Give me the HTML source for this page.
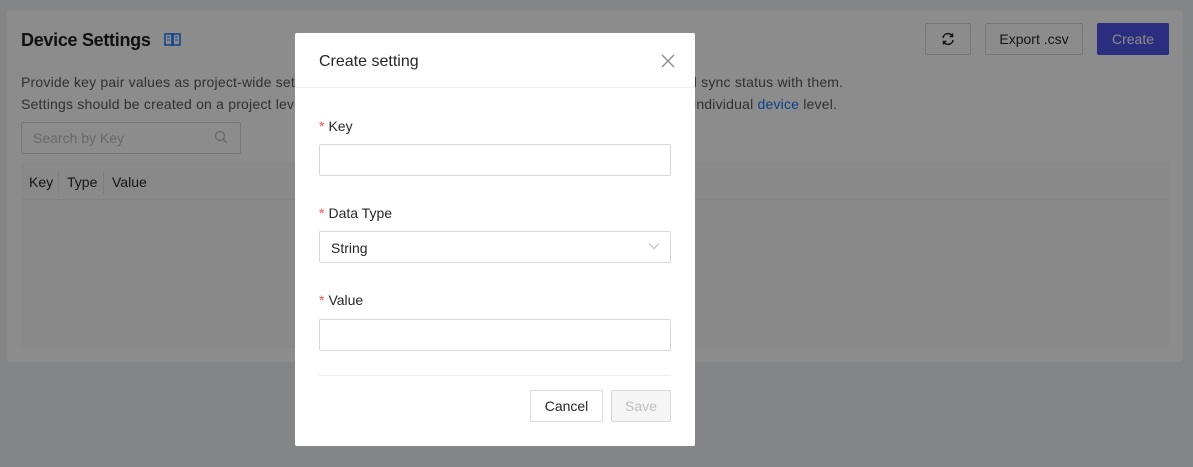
<!DOCTYPE html>
<html><head><style>
*{box-sizing:border-box;margin:0;padding:0}
body{width:1193px;height:467px;position:relative;overflow:hidden;background:#f0f2f5;font-family:"Liberation Sans",sans-serif;font-size:14px;color:#262626}
.a{position:absolute}
.card{left:7px;top:10px;width:1176px;height:352px;background:#fff;border-radius:4px}
.ov{left:0;top:0;width:1193px;height:467px;background:rgba(0,0,0,0.45)}
.btn{border:1px solid #d9d9d9;border-radius:2px;background:#fff;display:flex;align-items:center;justify-content:center;font-size:14px}
.inp{border:1px solid #d9d9d9;border-radius:2px;background:#fff;left:24px;width:352px;height:32px}
.lbl{left:24px;font-size:14px}
.lbl b{color:#ff4d4f;font-weight:normal;margin-right:4px}
</style></head><body>
<div class="a card"></div>
<div class="a" style="left:21px;top:30px;font-size:18px;font-weight:bold;color:#1f1f1f;letter-spacing:-0.3px">Device Settings</div>
<svg class="a" style="left:164px;top:33px" width="17" height="13" viewBox="0 0 17 13"><rect x="1" y="1" width="7" height="11" fill="none" stroke="#1677ff" stroke-width="1.5"/><rect x="9" y="1" width="7" height="11" fill="none" stroke="#1677ff" stroke-width="1.5"/><path d="M3 4h3M3 7h3M11 4h3M11 7h3" stroke="#1677ff"/></svg>
<div class="a btn" style="left:925px;top:23px;width:46px;height:32px"><svg width="16" height="16" viewBox="0 0 16 16" fill="none" stroke="#262626" stroke-width="1.5"><path d="M3 7A5 5 0 0 1 12.5 5.5M13 9A5 5 0 0 1 3.5 10.5"/><path d="M12.5 2.5v3h-3M3.5 13.5v-3h3"/></svg></div>
<div class="a btn" style="left:985px;top:23px;width:98px;height:32px">Export .csv</div>
<div class="a btn" style="left:1097px;top:23px;width:72px;height:32px;background:#4f52e8;border-color:#4f52e8;color:#fff">Create</div>
<div class="a" style="left:21px;top:71px;color:#595959;line-height:22px;letter-spacing:0.2px;white-space:nowrap">Provide key pair values as project-wide settings that devices can use and the devices will report individual sync status with them.<br>Settings should be created on a project level and you can override the settings for specific devices on an individual <span style="color:#1677ff">device</span> level.</div>
<div class="a" style="left:21px;top:122px;width:220px;height:32px;border:1px solid #d9d9d9;border-radius:2px;padding:7px 11px;color:#bfbfbf">Search by Key</div>
<svg class="a" style="left:214px;top:130px" width="14" height="14" viewBox="0 0 14 14" fill="none" stroke="#bfbfbf" stroke-width="1.3"><circle cx="6" cy="6" r="4.5"/><path d="M9.5 9.5L13 13"/></svg>
<div class="a" style="left:21px;top:162px;width:1148px;height:38px;background:#fafafa;border-bottom:1px solid #f0f0f0"></div>
<div class="a" style="left:29px;top:174px">Key</div>
<div class="a" style="left:58px;top:172px;width:1px;height:22px;background:#e8e8e8"></div>
<div class="a" style="left:67px;top:174px">Type</div>
<div class="a" style="left:103px;top:172px;width:1px;height:22px;background:#e8e8e8"></div>
<div class="a" style="left:112px;top:174px">Value</div>
<div class="a" style="left:21px;top:200px;width:1148px;height:148px;background:#fafafa"></div>
<div class="a ov"></div>
<div class="a" style="left:295px;top:33px;width:400px;height:413px;background:#fff;border-radius:2px">
 <div class="a" style="left:24px;top:20px;font-size:16px">Create setting</div>
 <svg class="a" style="left:366px;top:21px" width="14" height="14" viewBox="0 0 14 14" stroke="#8c8c8c" stroke-width="1.4"><path d="M1 1L13 13M13 1L1 13"/></svg>
 <div class="a" style="left:0;top:54px;width:400px;height:1px;background:#f0f0f0"></div>
 <div class="a lbl" style="top:85px"><b>*</b>Key</div>
 <div class="a inp" style="top:111px"></div>
 <div class="a lbl" style="top:172px"><b>*</b>Data Type</div>
 <div class="a inp" style="top:198px;padding:8px 11px">String</div>
 <svg class="a" style="left:353px;top:209px" width="12" height="8" viewBox="0 0 12 8" fill="none" stroke="#bfbfbf" stroke-width="1.2"><path d="M1 1.5L6 6.5L11 1.5"/></svg>
 <div class="a lbl" style="top:259px"><b>*</b>Value</div>
 <div class="a inp" style="top:286px"></div>
 <div class="a" style="left:24px;top:342px;width:352px;height:1px;background:#f0f0f0"></div>
 <div class="a btn" style="left:235px;top:357px;width:73px;height:32px">Cancel</div>
 <div class="a btn" style="left:316px;top:357px;width:60px;height:32px;background:#f5f5f5;color:#bfbfbf">Save</div>
</div>
</body></html>
